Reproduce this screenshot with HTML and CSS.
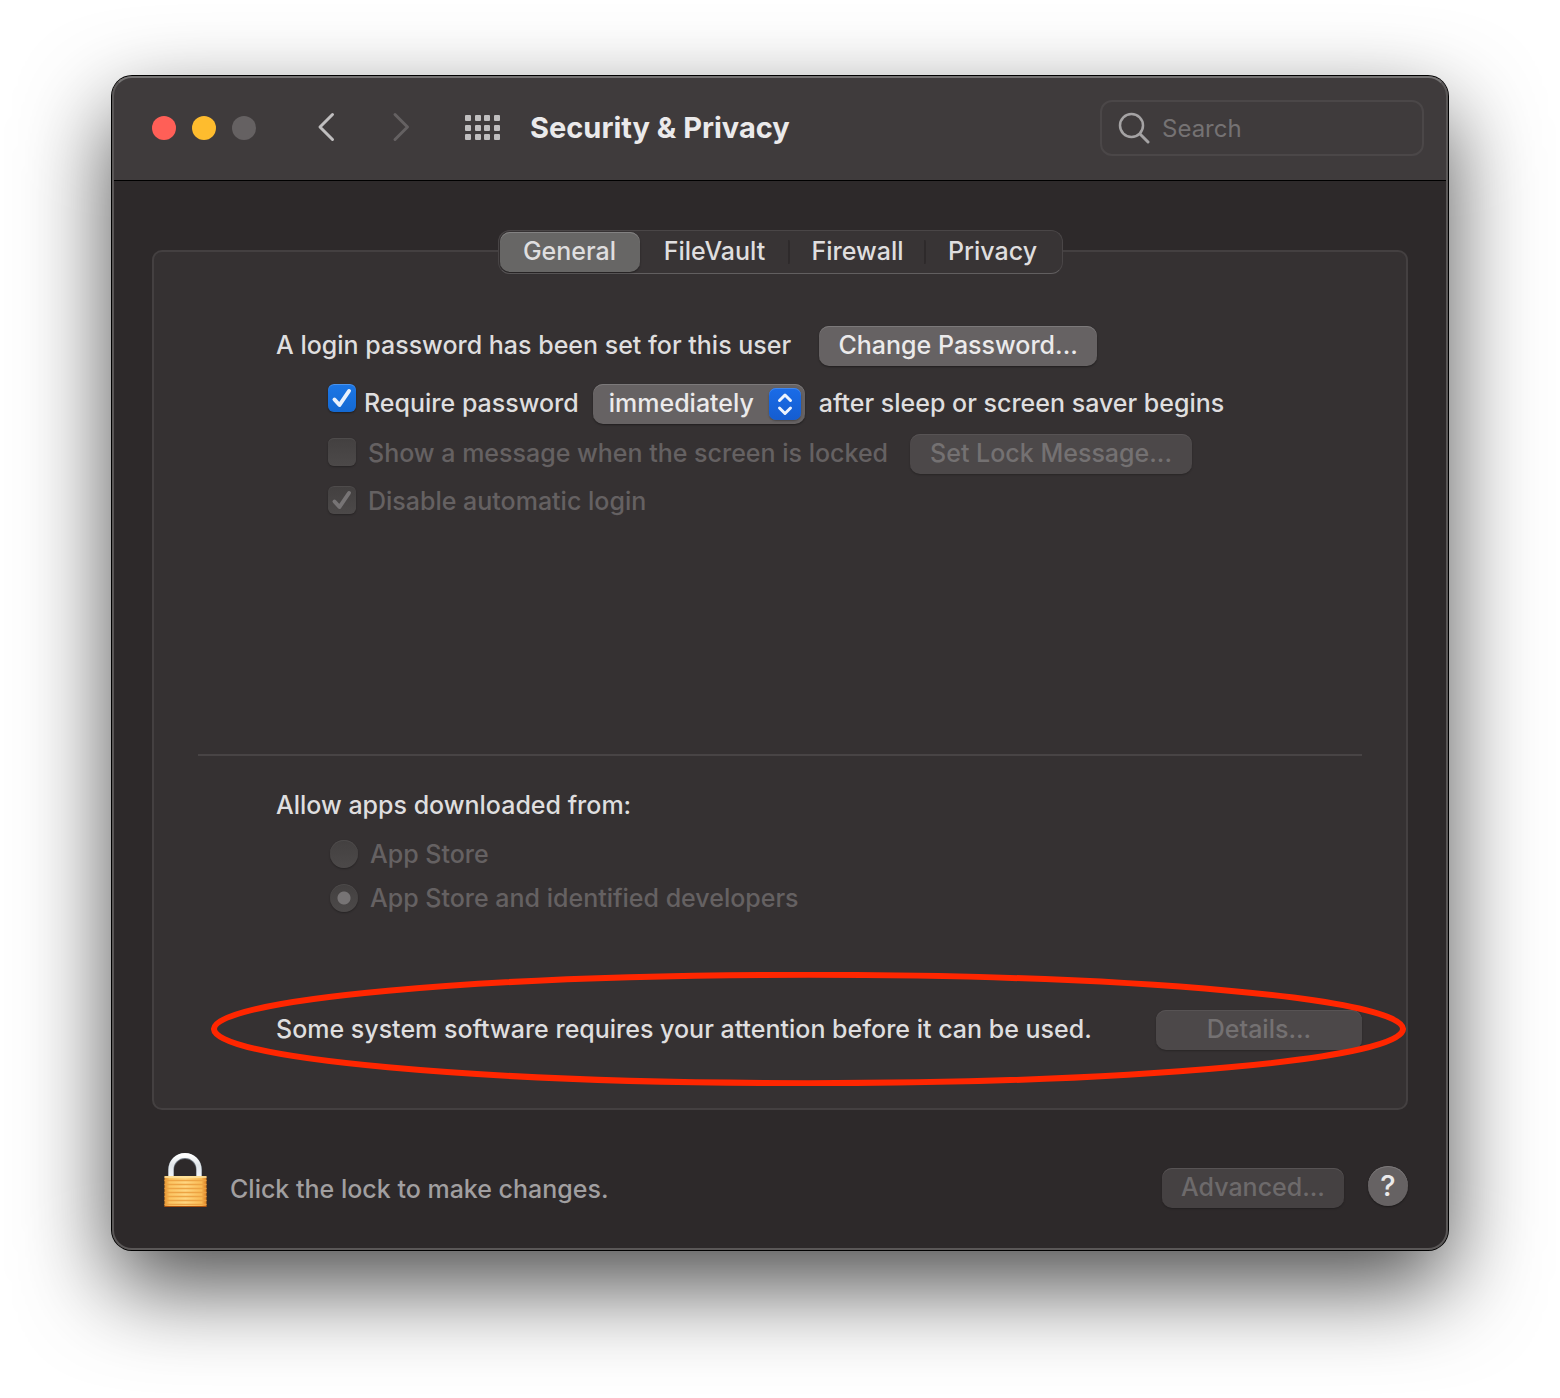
FILE: index.html
```html
<!DOCTYPE html>
<html lang="en">
<head>
<meta charset="utf-8">
<title>Security &amp; Privacy</title>
<link rel="stylesheet" href="styles.css">
</head>
<body>
<div class="window">
  <header class="toolbar">
    <div class="lights">
      <button class="light light-close" aria-label="Close"></button>
      <button class="light light-minimize" aria-label="Minimize"></button>
      <button class="light light-zoom" aria-label="Zoom" disabled></button>
    </div>
    <nav class="nav">
      <button class="icon-button" aria-label="Back">
        <svg width="20" height="32" viewBox="0 0 20 32"><path d="M16.500 2.500 4 15 16.500 27.500"/></svg>
      </button>
      <button class="icon-button icon-dim" aria-label="Forward" disabled>
        <svg width="20" height="32" viewBox="0 0 20 32"><path d="M4 2.500 16.500 15 4 27.500"/></svg>
      </button>
    </nav>
    <button class="icon-button show-all" aria-label="Show all">
      <svg width="36" height="26" viewBox="0 0 36 26">
        <g class="dots">
          <rect x="0" y="0" width="6" height="6" rx="1"/><rect x="10" y="0" width="6" height="6" rx="1"/><rect x="19" y="0" width="6" height="6" rx="1"/><rect x="29" y="0" width="6" height="6" rx="1"/>
          <rect x="0" y="10" width="6" height="6" rx="1"/><rect x="10" y="10" width="6" height="6" rx="1"/><rect x="19" y="10" width="6" height="6" rx="1"/><rect x="29" y="10" width="6" height="6" rx="1"/>
          <rect x="0" y="19" width="6" height="6" rx="1"/><rect x="10" y="19" width="6" height="6" rx="1"/><rect x="19" y="19" width="6" height="6" rx="1"/><rect x="29" y="19" width="6" height="6" rx="1"/>
        </g>
      </svg>
    </button>
    <h1 class="title">Security &amp; Privacy</h1>
    <label class="search">
      <svg width="32" height="32" viewBox="0 0 32 32" aria-hidden="true"><circle cx="13.500" cy="13.500" r="11.500"/><path class="handle" d="M22 22 30 30"/></svg>
      <input type="search" placeholder="Search" aria-label="Search">
    </label>
  </header>

  <main class="content">
    <div class="tabs" role="tablist">
      <button class="tab tab-active" role="tab" aria-selected="true">General</button>
      <button class="tab" role="tab">FileVault</button>
      <button class="tab" role="tab">Firewall</button>
      <button class="tab" role="tab">Privacy</button>
    </div>

    <section class="panel">
      <div class="group login">
        <div class="row row-first">
          <span>A login password has been set for this user</span>
          <button class="button button-password">Change Password...</button>
        </div>
        <div class="row indent row-require">
          <input class="check check-top" type="checkbox" id="require" checked>
          <label for="require">Require password</label>
          <span class="popup">
            <select aria-label="Delay before password is required"><option>immediately</option></select>
            <svg class="stepper" width="32" height="32" viewBox="0 0 32 32" aria-hidden="true"><path d="m10.500 12.500 5.500-5.500 5.500 5.500M10.500 20l5.500 5.500 5.500-5.500"/></svg>
          </span>
          <span>after sleep or screen saver begins</span>
        </div>
        <div class="row indent dim">
          <input class="check" type="checkbox" id="message" disabled>
          <label for="message">Show a message when the screen is locked</label>
          <button class="button button-message" disabled>Set Lock Message...</button>
        </div>
        <div class="row indent dim">
          <input class="check" type="checkbox" id="autologin" checked disabled>
          <label for="autologin">Disable automatic login</label>
        </div>
      </div>

      <hr class="divider">

      <div class="group" role="radiogroup" aria-labelledby="allow">
        <p class="heading" id="allow">Allow apps downloaded from:</p>
        <div class="option dim">
          <input class="radio" type="radio" name="apps" id="store" disabled>
          <label for="store">App Store</label>
        </div>
        <div class="option dim">
          <input class="radio" type="radio" name="apps" id="developers" checked disabled>
          <label for="developers">App Store and identified developers</label>
        </div>
      </div>

      <div class="attention">
        <span>Some system software requires your attention before it can be used.</span>
        <button class="button button-details" disabled>Details...</button>
        <svg class="ring" viewBox="0 0 1200 120" preserveAspectRatio="none" aria-hidden="true"><ellipse cx="600" cy="60" rx="597" ry="57"/></svg>
      </div>
    </section>

    <footer class="footer">
      <button class="lock" aria-label="Unlock">
        <svg width="46" height="56" viewBox="0 0 46 56">
          <defs>
            <linearGradient id="gold" x1="0" x2="1" y1="0" y2="0"><stop offset="0" stop-color="#e38f2c"/><stop offset=".12" stop-color="#fbc461"/><stop offset=".5" stop-color="#ffd680"/><stop offset=".88" stop-color="#f9bb55"/><stop offset="1" stop-color="#d97b1e"/></linearGradient>
            <linearGradient id="steel" x1="0" x2="0" y1="0" y2="1"><stop offset="0" stop-color="#fff"/><stop offset=".45" stop-color="#dfe4e8"/><stop offset="1" stop-color="#f3f7fb"/></linearGradient>
          </defs>
          <path d="M9 24V17a14 14 0 0 1 28 0V24" fill="none" stroke="#6d7680" stroke-width="6"/>
          <path d="M9 24V16.500a14 14 0 0 1 28 0V24" fill="none" stroke="url(#steel)" stroke-width="5"/>
          <rect x="2.500" y="23" width="42" height="31" rx="1" fill="url(#gold)" stroke="none"/>
          <path d="M3 27.500h41M3 31.500h41M3 35.500h41M3 39.500h41M3 43.500h41M3 47.500h41M3 51.500h41" stroke="#eda343" stroke-width="1.300"/>
          <path d="M3 24h41" stroke="#ffe6a3" stroke-width="1.500"/>
          <path d="M3 53.500h41" stroke="#a94f0e"/>
        </svg>
      </button>
      <span class="footer-text">Click the lock to make changes.</span>
      <button class="button button-advanced" disabled>Advanced...</button>
      <button class="help" aria-label="Help">?</button>
    </footer>
  </main>
</div>
</body>
</html>
```
FILE: styles.css
```css
* { box-sizing: border-box; }

body {
  margin: 0;
  padding: 76px 112px 148px;
  background: #fff;
  color: #dfdedf;
  font: 500 25px/32px Inter, "Liberation Sans", sans-serif;
}

button, input, select { font: inherit; color: inherit; }
button { border: 0; padding: 0; background: none; }
svg { display: block; fill: none; stroke: currentColor; stroke-linecap: round; stroke-linejoin: round; }

.window {
  position: relative;
  border-radius: 20px;
  background: #2d292a;
  box-shadow: 0 0 0 1px #000, 0 36px 90px rgba(0, 0, 0, .7);
}

/* Light rim drawn over the toolbar and content */
.window::after {
  content: "";
  position: absolute;
  inset: 0;
  border: 2px solid #5a5757;
  border-top-color: #757373;
  border-radius: 20px;
  pointer-events: none;
}

.toolbar {
  display: flex;
  align-items: center;
  height: 105px;
  padding: 0 24px 0 40px;
  border-bottom: 1px solid #000;
  border-radius: 20px 20px 0 0;
  background: #3f3b3c;
}
.lights { display: flex; gap: 16px; }
.light { width: 24px; height: 24px; border-radius: 50%; }
.light-close { background: #ff5f57; }
.light-minimize { background: #febc2e; }
.light-zoom { background: #656162; }

.nav { display: flex; gap: 55px; margin-left: 60px; }
.icon-button { color: #c0bebf; }
.icon-button svg { stroke-width: 3; }
.icon-dim { color: #656162; }
.show-all { margin-left: 54px; }
.dots { fill: currentColor; stroke: none; }
.title { margin: 0 auto 0 29px; color: #ebeaeb; font-size: 29px; font-weight: 700; line-height: 32px; }

.search {
  display: flex;
  align-items: center;
  gap: 12px;
  width: 324px;
  height: 56px;
  padding: 0 16px;
  border: 2px solid #4b4748;
  border-radius: 12px;
  color: #a5a3a4;
}
.search svg { flex: none; stroke-width: 2.500; }
.handle { stroke-width: 3; }
.search input { width: 100%; min-width: 0; padding: 2px 0 0; border: 0; outline: 0; background: none; font-size: 24px; font-weight: 400; }
.search input::placeholder { color: #757273; opacity: 1; }

.content { display: flex; flex-direction: column; padding: 49px 40px 41px; }

.tabs {
  position: relative;
  display: flex;
  align-self: center;
  height: 44px;
  margin-bottom: -24px;
  padding: 2px;
  border: 1px solid #4a4647;
  border-bottom-color: #625f60;
  border-radius: 12px;
  background: #383435;
}
.tab { width: 134px; height: 40px; margin-top: -1px; padding-bottom: 2px; border-radius: 10px; }
.tab:nth-child(2) { width: 150px; }
.tab:nth-child(3) { width: 136px; }
.tab:nth-child(2), .tab:nth-child(3) { background: linear-gradient(#2e2a2b, #2e2a2b) right center / 2px 24px no-repeat; }
.tab-active { width: 140px; margin-left: -1px; background: #676665; box-shadow: inset 0 1px #838282, 0 1px 2px rgba(0, 0, 0, .4); }

.panel {
  padding: 74px 44px 58px;
  border: 2px solid #444041;
  border-radius: 10px;
  background: #353132;
}
.group { padding-left: 78px; }
.row { display: flex; align-items: center; min-height: 40px; margin-bottom: 8px; white-space: nowrap; }
.row > span, .row > label { padding-bottom: 2px; }
.row-first { margin-bottom: 18px; }
.row-require { margin-bottom: 10px; }
.indent { padding-left: 52px; }
.login { padding-bottom: 232px; }
.login .dim:last-child { margin: 0; }
.dim { color: #656162; }

.button {
  flex: none;
  height: 40px;
  padding: 0 0 2px;
  border-radius: 10px;
  background: #666263;
  color: #ebeaeb;
  box-shadow: inset 0 1px #7c797a, 0 1px 2px rgba(0, 0, 0, .4);
}
.button:disabled { background: #4c4849; color: #747172; box-shadow: inset 0 1px #575354, 0 1px 2px rgba(0, 0, 0, .25); }
.button-password { width: 278px; margin-left: 28px; }
.button-message { width: 282px; margin-left: 22px; }
.button-details { width: 206px; }
.button-advanced { width: 182px; }
.button-advanced:disabled { background: #454142; color: #6d6a6b; }

.check, .radio {
  flex: none;
  appearance: none;
  width: 28px;
  height: 28px;
  margin: 0 12px 0 0;
  border-radius: 6px;
  background: linear-gradient(#434040, #4c4949);
  box-shadow: inset 0 1px #4e4b4b, 0 1px 2px rgba(0, 0, 0, .3);
}
.check { margin-bottom: 4px; }
.check:checked {
  background: url("data:image/svg+xml,%3Csvg xmlns='http://www.w3.org/2000/svg' viewBox='0 0 28 28'%3E%3Cpath d='m6.500 15.500 5 5.500L21 7' fill='none' stroke='%23777475' stroke-width='4' stroke-linecap='round' stroke-linejoin='round'/%3E%3C/svg%3E"), linear-gradient(#434040, #4c4949);
}
.check:checked:enabled {
  background: url("data:image/svg+xml,%3Csvg xmlns='http://www.w3.org/2000/svg' viewBox='0 0 28 28'%3E%3Cpath d='m6.500 15.500 5 5.500L21 7' fill='none' stroke='%23e9f1fc' stroke-width='4' stroke-linecap='round' stroke-linejoin='round'/%3E%3C/svg%3E"), linear-gradient(#1c77e6, #1469d2);
  box-shadow: inset 0 1px #4a93ec, 0 1px 2px rgba(0, 0, 0, .4);
}
.check-top { align-self: flex-start; margin-right: 8px; }
.radio { border-radius: 50%; }
.radio:checked { background: radial-gradient(circle, #777475 6px, transparent 7px), linear-gradient(#434040, #4c4949); }

.popup { position: relative; margin: 0 14px; }
.row > .popup { padding: 0; }
.popup select {
  display: block;
  appearance: none;
  width: 212px;
  height: 40px;
  padding: 0 40px 2px 16px;
  border: 0;
  border-radius: 10px;
  background: #666263;
  color: #ebeaeb;
  box-shadow: inset 0 1px #7c797a, 0 1px 2px rgba(0, 0, 0, .4);
}
.stepper {
  position: absolute;
  top: 4px;
  right: 4px;
  border-radius: 7px;
  background: linear-gradient(#1a6ce8, #155dd0);
  box-shadow: inset 0 1px #3f86ee, 0 1px 2px rgba(0, 0, 0, .3);
  color: #edf3fd;
  stroke-width: 3;
  pointer-events: none;
}

.divider { height: 2px; margin: 0; border: 0; background: #484445; }
.heading { margin: 33px 0 17px; }
.option { display: flex; align-items: center; height: 32px; margin-bottom: 12px; padding-left: 54px; }

.attention {
  position: relative;
  display: flex;
  align-items: center;
  justify-content: space-between;
  margin-top: 96px;
  padding-left: 78px;
}
.attention > span { padding-bottom: 2px; }
.ring { position: absolute; top: -38px; left: 13px; width: calc(100% + 31px); height: 114px; color: #ff2600; pointer-events: none; }
.ring ellipse { stroke-width: 6; vector-effect: non-scaling-stroke; }

.footer { display: flex; align-items: center; margin-top: 43px; padding-left: 10px; }
.lock { margin-right: 22px; }
.footer-text { margin-right: auto; padding-top: 16px; color: #a19fa0; }
.button-advanced { margin: 14px 24px 0 0; }
.help {
  width: 40px;
  height: 40px;
  margin-top: 10px;
  border-radius: 50%;
  background: #666263;
  box-shadow: inset 0 1px #7c797a, 0 1px 2px rgba(0, 0, 0, .4);
  color: #ebeaeb;
  font-size: 29px;
}
```
